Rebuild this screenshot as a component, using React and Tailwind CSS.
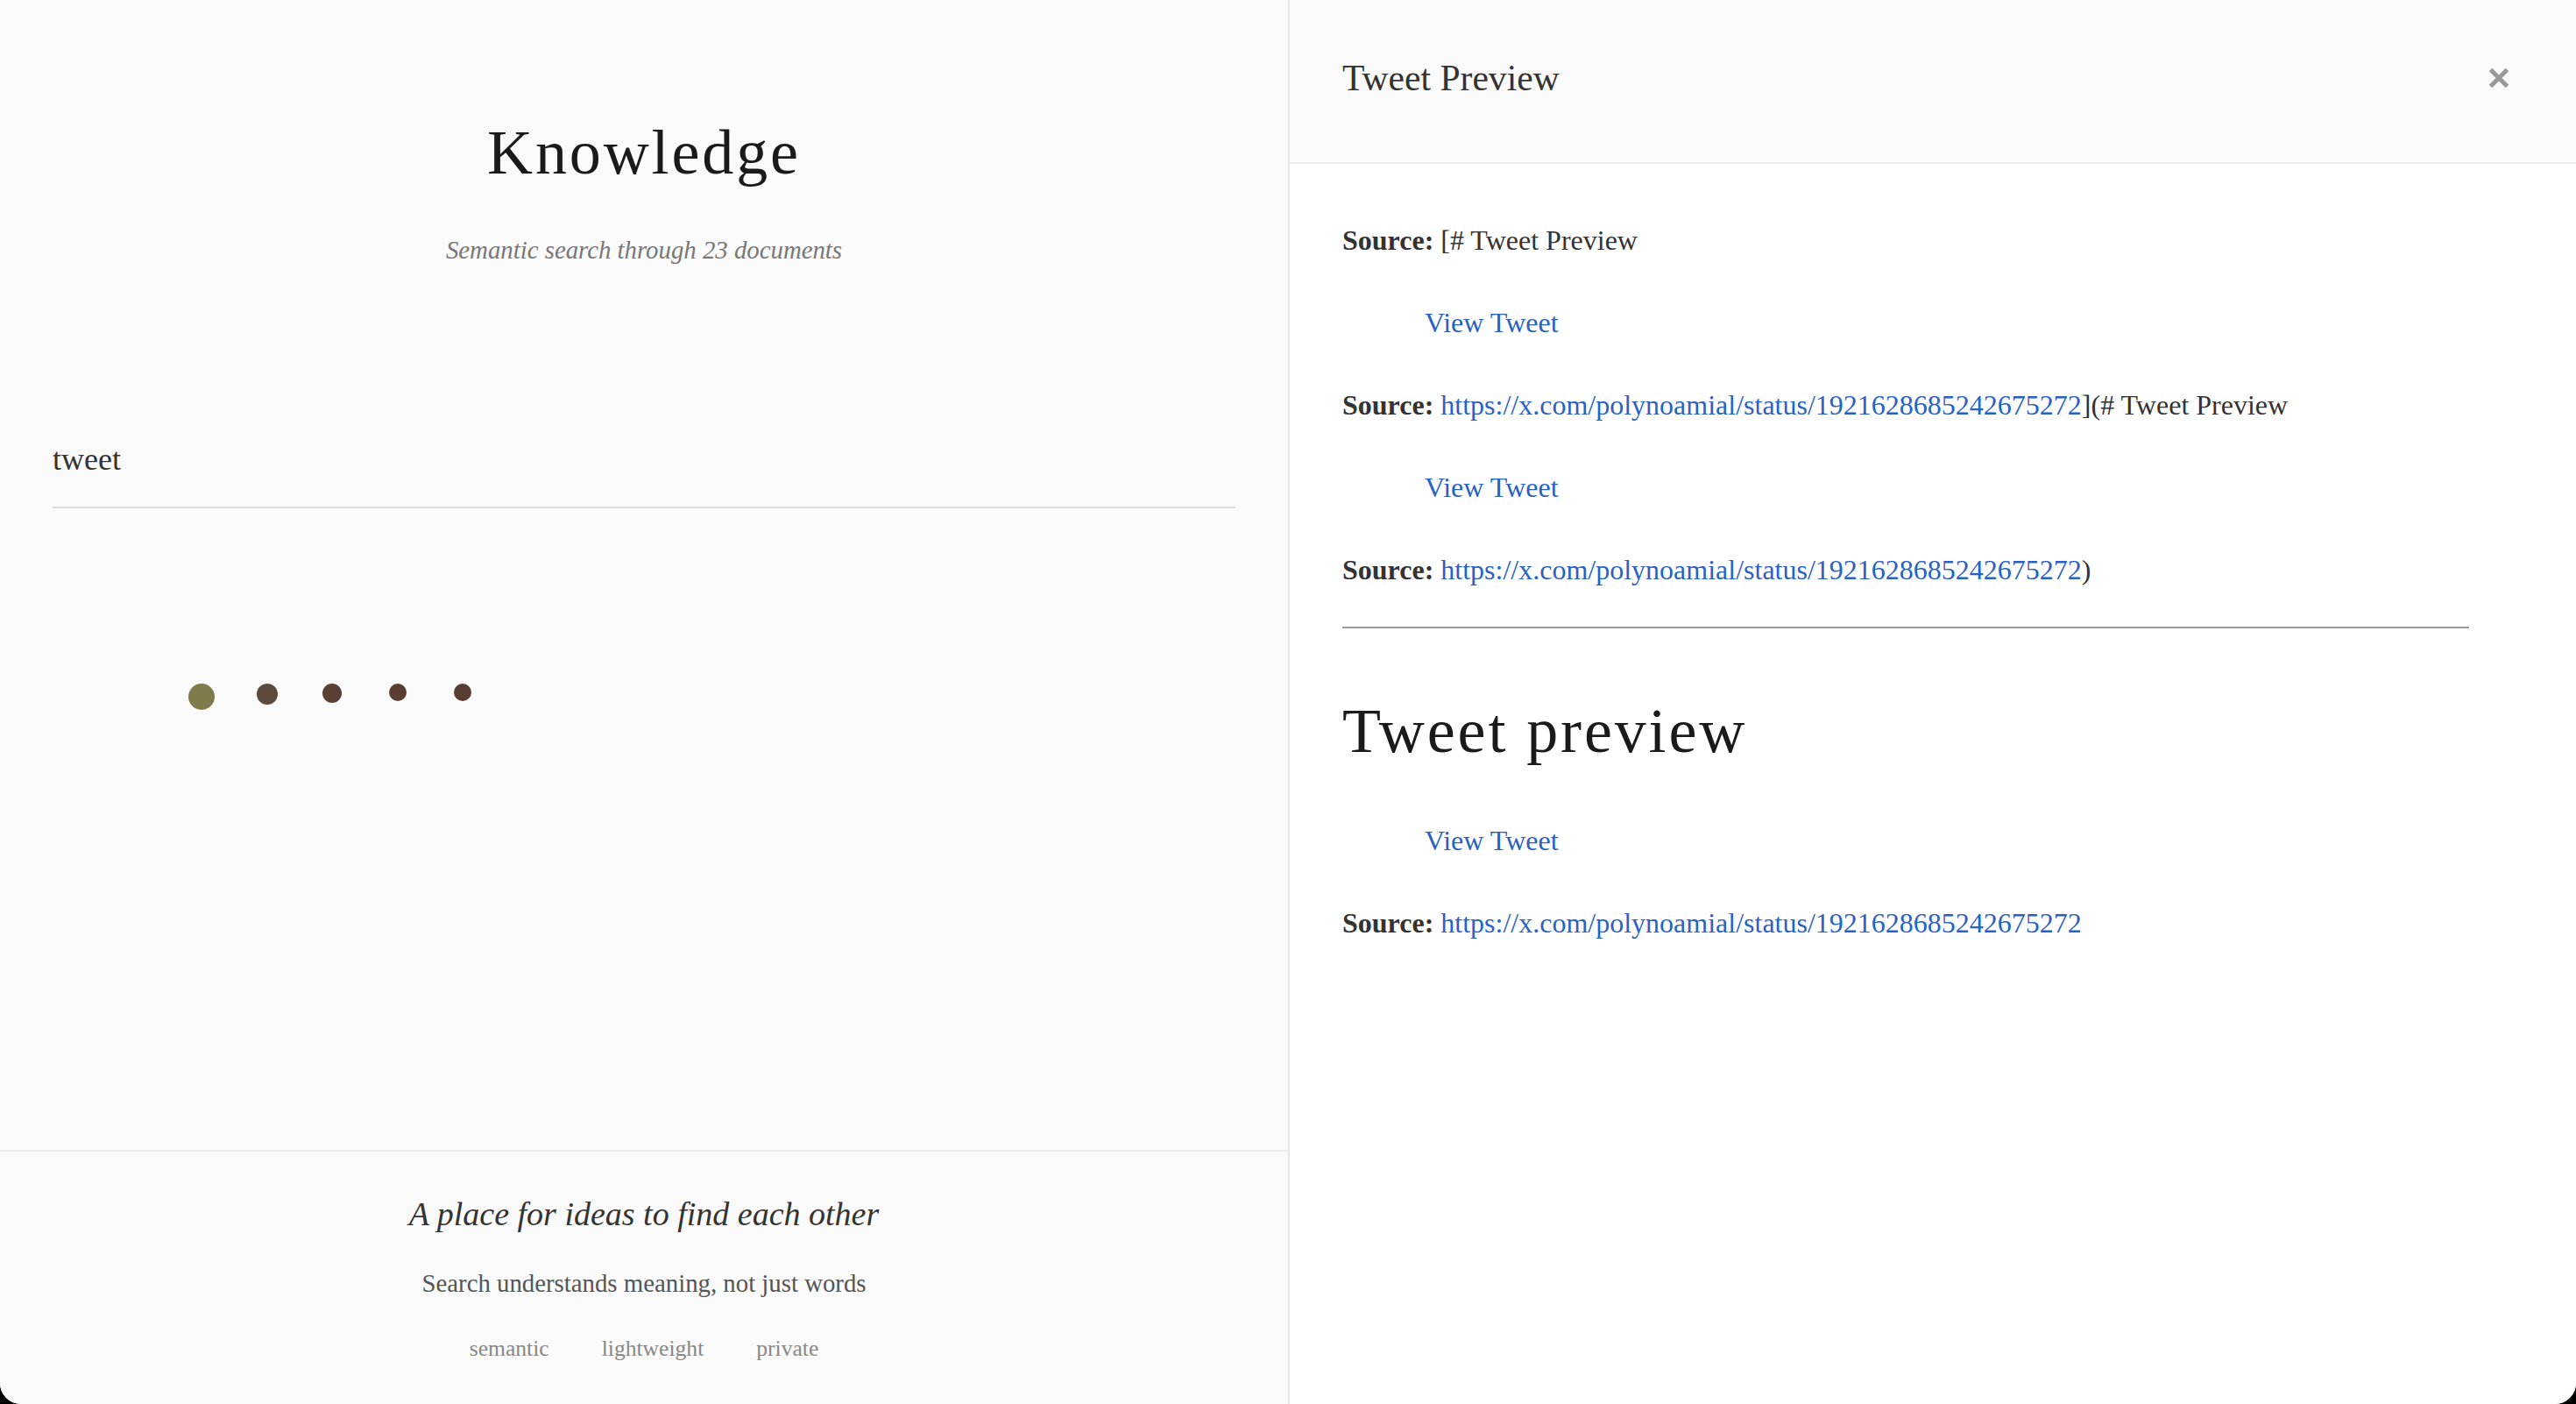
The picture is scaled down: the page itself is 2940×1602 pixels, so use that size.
import React from "react";

const LINK = "text-[#2a62c4]";
const URL = "https://x.com/polynoamial/status/1921628685242675272";

function Dots() {
  const dots = [
    { s: "w-[30px] h-[30px] bg-[#7f7b4d]" },
    { s: "w-[24px] h-[24px] bg-[#5e4a3a]" },
    { s: "w-[22px] h-[22px] bg-[#5a4034]" },
    { s: "w-[20px] h-[20px] bg-[#5a3e33]" },
    { s: "w-[20px] h-[20px] bg-[#583d33]" },
  ];
  return (
    <div className="flex items-start pl-[193px] mt-[199.5px]">
      {dots.map((d, i) => (
        <div key={i} className="w-[74.5px] flex justify-center">
          <div className={`rounded-full ${d.s}`} />
        </div>
      ))}
    </div>
  );
}

function Line({ children, indent }) {
  return (
    <div className={`text-[32px] leading-[51.2px] text-[#333] ${indent ? "pl-[94px]" : ""}`}>
      {children}
    </div>
  );
}

function Source({ children }) {
  return (
    <Line>
      <span className="font-bold">Source:</span> {children}
    </Line>
  );
}

export default function App() {
  return (
    <div className="w-[2940px] h-[1602px] bg-black font-['Liberation_Serif',serif]">
      <div className="flex w-full h-full rounded-b-[24px] overflow-hidden bg-[#fafafa]">
        {/* Left panel */}
        <div className="w-[1470px] h-full flex flex-col bg-[#fafafa]">
          <div className="flex-1 flex flex-col">
            <h1 className="mt-[130.5px] text-center text-[72px] leading-[86.4px] tracking-[0.04em] text-[#1a1a1a] font-normal">
              Knowledge
            </h1>
            <p className="mt-[46.8px] text-center text-[28.8px] leading-[43.2px] italic text-[#777]">
              Semantic search through 23 documents
            </p>
            <div className="px-[60px] mt-[196px]">
              <div className="border-b-2 border-[#dddddd] pb-[32px] text-[36px] leading-[43.2px] text-[#333]">
                tweet
              </div>
            </div>
            <Dots />
          </div>
          <div className="h-[290px] border-t-2 border-[#ececec] flex flex-col items-center pt-[49px]">
            <p className="text-[38px] leading-[45.6px] italic text-[#333]">
              A place for ideas to find each other
            </p>
            <p className="mt-[38px] text-[28.8px] leading-[34.56px] text-[#555]">
              Search understands meaning, not just words
            </p>
            <div className="mt-[42.4px] flex gap-[60px] text-[25.6px] leading-[30.72px] text-[#888]">
              <span>semantic</span>
              <span>lightweight</span>
              <span>private</span>
            </div>
          </div>
        </div>

        {/* Right panel */}
        <div className="flex-1 h-full flex flex-col border-l-2 border-[#e6e6e6] bg-white">
          <div className="h-[187px] shrink-0 flex items-center justify-between pl-[60px] pr-[76px] pb-[8px] bg-[#fafafa] border-b-2 border-[#ececec]">
            <span className="text-[41.6px] leading-[48px] text-[#333]">Tweet Preview</span>
            <svg width="24" height="24" viewBox="0 0 24 24" className="block">
              <path d="M2.5 2.5 L21.5 21.5 M21.5 2.5 L2.5 21.5" stroke="#999999" strokeWidth="5" fill="none" />
            </svg>
          </div>
          <div className="flex-1 pl-[60px] pt-[61.6px]">
            <div className="w-[1286px] flex flex-col">
              <div className="flex flex-col gap-[42.8px]">
                <Source>[# Tweet Preview</Source>
                <Line indent>
                  <span className={LINK}>View Tweet</span>
                </Line>
                <Source>
                  <span className={LINK}>{URL}</span>](# Tweet Preview
                </Source>
                <Line indent>
                  <span className={LINK}>View Tweet</span>
                </Line>
                <Source>
                  <span className={LINK}>{URL}</span>)
                </Source>
              </div>
              <div className="mt-[39.2px] border-t-2 border-[#9a9a9a]" />
              <h2 className="mt-[74.5px] text-[72px] leading-[86.4px] tracking-[0.04em] text-[#1a1a1a] font-normal">
                Tweet preview
              </h2>
              <div className="mt-[56.4px] flex flex-col gap-[42.8px]">
                <Line indent>
                  <span className={LINK}>View Tweet</span>
                </Line>
                <Source>
                  <span className={LINK}>{URL}</span>
                </Source>
              </div>
            </div>
          </div>
        </div>
      </div>
    </div>
  );
}
